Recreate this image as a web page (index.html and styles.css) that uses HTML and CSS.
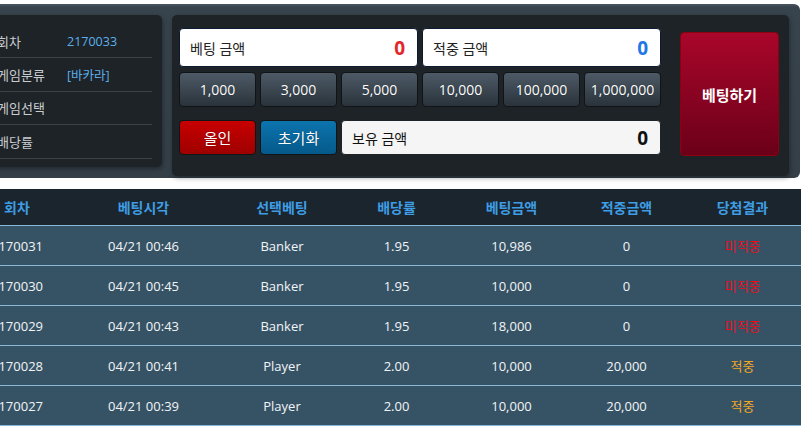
FILE: index.html
```html
<!DOCTYPE html>
<html lang="ko">
<head>
    <meta charset="UTF-8">
    <title>베팅</title>
    <link rel="stylesheet" href="styles.css">
</head>
<body>
    <div class="page">
        <div class="game-box">
            <div class="info-panel">
                <div class="info-row"><span class="info-label">회차</span><span class="info-value">2170033</span></div>
                <div class="info-row"><span class="info-label">게임분류</span><span class="info-value">[바카라]</span></div>
                <div class="info-row"><span class="info-label">게임선택</span><span class="info-value"></span></div>
                <div class="info-row"><span class="info-label">배당률</span><span class="info-value"></span></div>
            </div>
            <div class="bet-panel">
                <div class="bet-grid">
                    <div class="amount-box span3"><span>베팅 금액</span><b class="red">0</b></div>
                    <div class="amount-box span3"><span>적중 금액</span><b class="blue">0</b></div>
                    <button class="chip">1,000</button>
                    <button class="chip">3,000</button>
                    <button class="chip">5,000</button>
                    <button class="chip">10,000</button>
                    <button class="chip">100,000</button>
                    <button class="chip">1,000,000</button>
                    <button class="btn-allin">올인</button>
                    <button class="btn-reset">초기화</button>
                    <div class="amount-box owned span4"><span>보유 금액</span><b>0</b></div>
                </div>
                <button class="btn-bet">베팅하기</button>
            </div>
        </div>
        <table class="history">
            <thead>
                <tr><th>회차</th><th>베팅시각</th><th>선택베팅</th><th>배당률</th><th>베팅금액</th><th>적중금액</th><th>당첨결과</th></tr>
            </thead>
            <tbody>
                <tr><td>2170031</td><td>04/21 00:46</td><td>Banker</td><td>1.95</td><td>10,986</td><td>0</td><td class="lose">미적중</td></tr>
                <tr><td>2170030</td><td>04/21 00:45</td><td>Banker</td><td>1.95</td><td>10,000</td><td>0</td><td class="lose">미적중</td></tr>
                <tr><td>2170029</td><td>04/21 00:43</td><td>Banker</td><td>1.95</td><td>18,000</td><td>0</td><td class="lose">미적중</td></tr>
                <tr><td>2170028</td><td>04/21 00:41</td><td>Player</td><td>2.00</td><td>10,000</td><td>20,000</td><td class="win">적중</td></tr>
                <tr><td>2170027</td><td>04/21 00:39</td><td>Player</td><td>2.00</td><td>10,000</td><td>20,000</td><td class="win">적중</td></tr>
            </tbody>
        </table>
    </div>
</body>
</html>
```

FILE: styles.css
```css
body {
    margin: 0;
    background-color: #ffffff;
    font-family: "Open Sans", "Noto Sans CJK KR", sans-serif;
    overflow: hidden;
}
.page {
    margin-left: -28px;
    width: 829px;
    padding-top: 4px;
}
.game-box {
    display: flex;
    align-items: flex-start;
    gap: 10px;
    height: 174px;
    box-sizing: border-box;
    margin-right: 1px;
    padding: 11px 11px 2px 11px;
    background: linear-gradient(to bottom, #4a5560 0, #38444d 3px, #343f48 100%);
    border-radius: 0 6px 6px 0;
}
.info-panel {
    width: 179px;
    height: 152px;
    box-sizing: border-box;
    padding: 10px 10px 0 14px;
    background-color: #1e2327;
    border-radius: 5px;
    box-shadow: 1px 2px 5px rgba(0, 0, 0, 0.35);
}
.info-row {
    display: flex;
    align-items: center;
    height: 32.4px;
    border-bottom: 1px solid #3b4349;
    font-size: 13px;
}
.info-label {
    width: 70px;
    color: #c9cdd1;
}
.info-value {
    color: #5cb0ec;
    font-size: 12.5px;
}
.bet-panel {
    display: flex;
    width: 617px;
    height: 161px;
    box-sizing: border-box;
    padding: 13px 10px 0 7px;
    background-color: #1e2327;
    border-radius: 5px;
    box-shadow: 1px 2px 5px rgba(0, 0, 0, 0.35);
}
.bet-grid {
    display: grid;
    grid-template-columns: repeat(6, 77px);
    grid-template-rows: 39px 35px 43px;
    column-gap: 4px;
    row-gap: 5px;
    width: 482px;
}
.span3 {
    grid-column: span 3;
}
.span4 {
    grid-column: span 4;
}
.amount-box {
    display: flex;
    align-items: center;
    justify-content: space-between;
    padding: 0 12px 0 10px;
    background-color: #ffffff;
    border: 1px solid #0d1a33;
    border-radius: 4px;
    font-size: 14px;
    color: #222222;
}
.amount-box b {
    font-size: 19px;
    font-weight: 700;
}
.amount-box .red {
    color: #e3262a;
}
.amount-box .blue {
    color: #1f78e6;
}
.amount-box.owned {
    margin-top: 8px;
    background-color: #f5f5f5;
    border-color: #1e2327;
    color: #111111;
}
button {
    font-family: inherit;
    cursor: pointer;
}
.chip, .btn-allin, .btn-reset {
    height: 35px;
    padding: 0;
    border: 1px solid #111417;
    border-radius: 4px;
    color: #ffffff;
    font-size: 14px;
    text-shadow: 0 0 1px rgba(0, 0, 0, 0.4);
}
.chip {
    background: linear-gradient(to bottom, #4d5a66, #2a333b);
}
.btn-allin, .btn-reset {
    margin-top: 8px;
    font-size: 15px;
}
.btn-allin {
    background: linear-gradient(to bottom, #c80000, #9e0000);
}
.btn-reset {
    background: linear-gradient(to bottom, #0c74ae, #05598a);
}
.btn-bet {
    width: 99px;
    height: 124px;
    margin: 4px 0 0 19px;
    background: linear-gradient(to bottom, #a9062a, #6b0019);
    border: 1px solid #8d0010;
    border-radius: 4px;
    color: #ffffff;
    font-size: 15px;
    font-weight: 700;
}
.history {
    width: 829px;
    margin-top: 11px;
    border-collapse: collapse;
    table-layout: fixed;
    font-size: 13px;
}
.history th:nth-child(1) { width: 90px; }
.history th:nth-child(2) { width: 163px; }
.history th:nth-child(3) { width: 114px; }
.history th:nth-child(4) { width: 115px; }
.history th:nth-child(5) { width: 115px; }
.history th:nth-child(6) { width: 115px; }
.history th:nth-child(7) { width: 117px; }
.history th {
    height: 36px;
    padding: 0;
    background-color: #1b252d;
    color: #3e9de4;
    font-size: 14px;
    font-weight: 700;
    border-bottom: 1px solid #8ab8d8;
}
.history td {
    height: 39px;
    padding: 0;
    text-align: center;
    background-color: #365366;
    color: #f2f4f6;
    border-bottom: 1px solid #8ab8d8;
}
.history td.lose {
    color: #ec0b1c;
}
.history td.win {
    color: #f4a623;
}
```
